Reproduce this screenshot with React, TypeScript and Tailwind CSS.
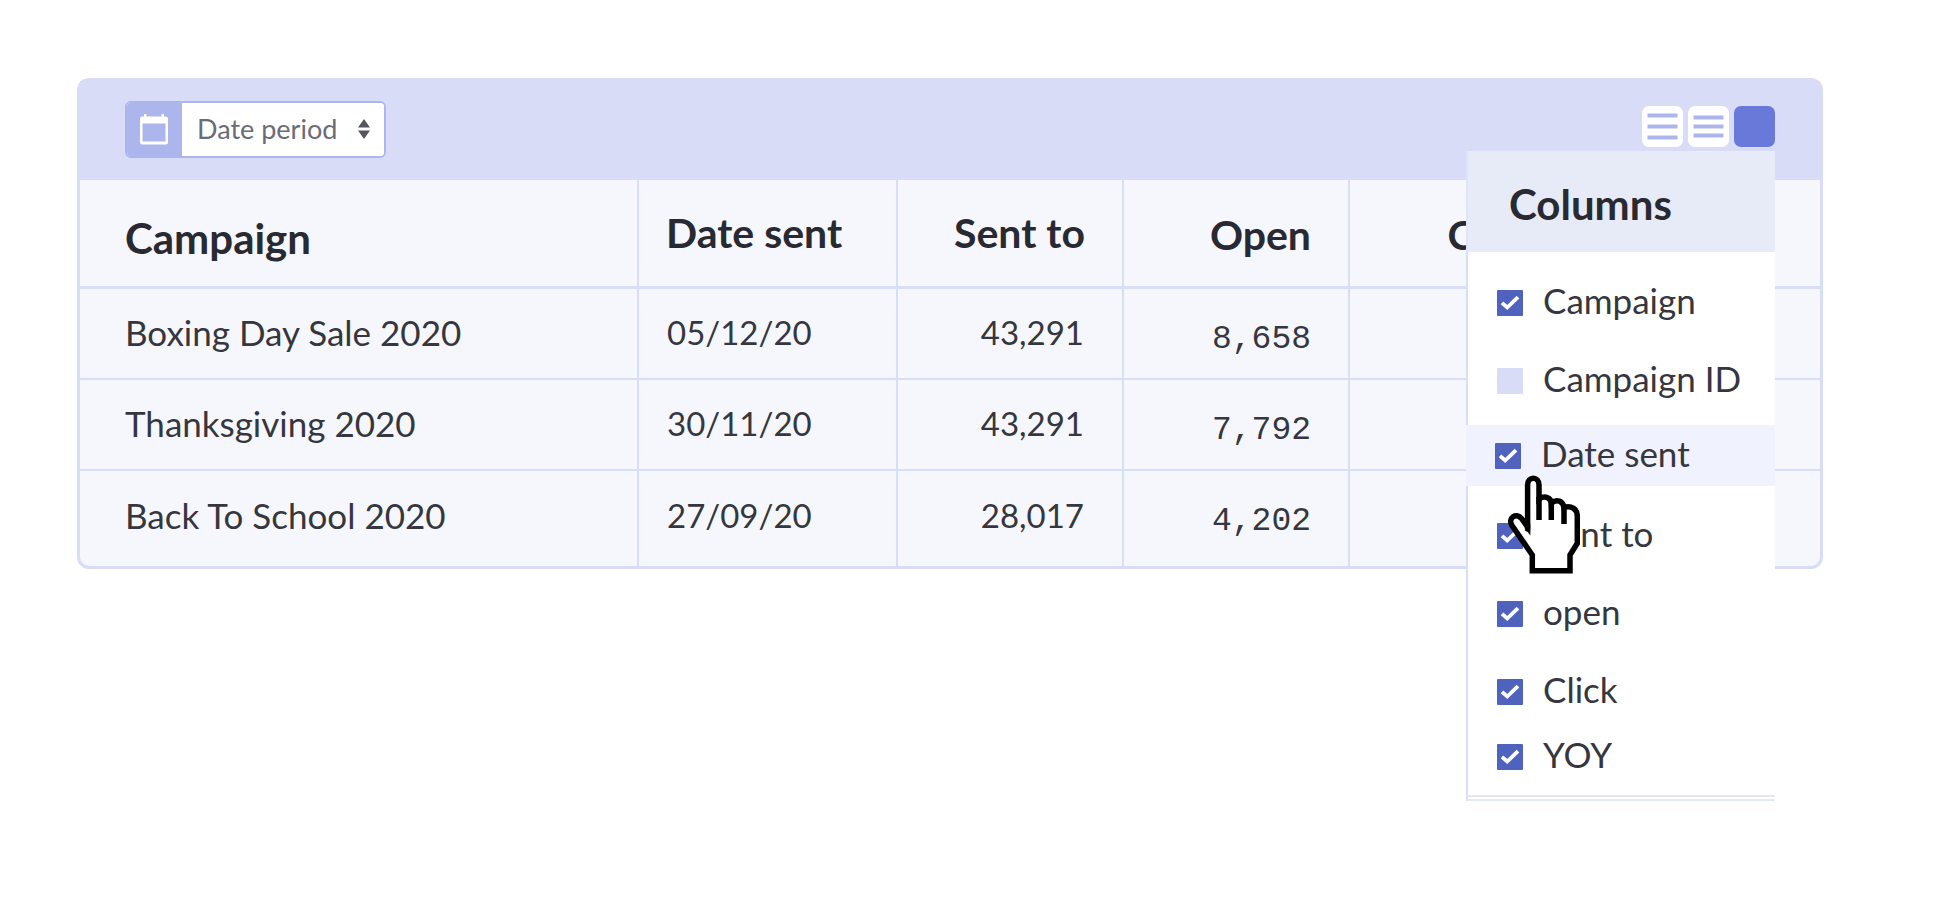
import React, { useState } from "react";

type Row = { name: string; date: string; sent: string; open: string };

const rows: Row[] = [
  { name: "Boxing Day Sale 2020", date: "05/12/20", sent: "43,291", open: "8,658" },
  { name: "Thanksgiving 2020", date: "30/11/20", sent: "43,291", open: "7,792" },
  { name: "Back To School 2020", date: "27/09/20", sent: "28,017", open: "4,202" },
];

const options = ["Campaign", "Campaign ID", "Date sent", "Sent to", "open", "Click", "YOY"];

function Lines({ offset }: { offset: number }) {
  return (
    <svg viewBox="0 0 41 41" className="size-full" stroke="#adb6ec" strokeWidth="4" aria-hidden="true">
      <path d={`M5.500 ${20.5 - offset}h30M5.500 20.5h30M5.500 ${20.5 + offset}h30`} />
    </svg>
  );
}

function ColumnOption({ label }: { label: string }) {
  const [checked, setChecked] = useState(label !== "Campaign ID");
  const active = label === "Date sent";
  const height = active ? "mt-[5px] mb-[11px] -ml-[2px] h-[61px] bg-[#f0f3fd]" : label === "YOY" ? "h-[52px]" : "h-[78px]";
  return (
    <li className={height}>
      <label className="flex h-full items-center pl-[29px] text-[35px] leading-[40px]">
        <span className="relative mr-[20px] block size-[26px] shrink-0">
          <input
            type="checkbox"
            checked={checked}
            onChange={() => setChecked(!checked)}
            className="block size-[26px] appearance-none rounded-[1px] bg-[#d8dcf6] checked:bg-[#4f62bd]"
          />
          {checked && (
            <svg viewBox="0 0 26 26" className="pointer-events-none absolute inset-0" fill="none" stroke="#fff" strokeWidth="3.8" aria-hidden="true">
              <path d="M5 12.800l5.200 4.700L21 7.200" />
            </svg>
          )}
        </span>
        <span className="pb-[6px]">{label}</span>
      </label>
    </li>
  );
}

export default function App() {
  const head = "border-l-2 border-[#d8def7] font-bold";
  const cell = "border-l-2 border-[#d8def7]";
  return (
    <main className="min-h-screen bg-white pt-[78px] pr-[125px] pl-[77px] font-['Lato',sans-serif] text-[#36373e]">
      <section className="relative rounded-[12px] border-[3px] border-[#d8dcf6] bg-[#f5f7fc]">
        <header className="flex h-[99px] items-start justify-between bg-[#d8dcf6] pr-[45px] pl-[45px]">
          <div className="mt-[20px] flex h-[57px] w-[261px] overflow-hidden rounded-[6px] border-2 border-[#adb6ec] bg-white">
            <span className="flex w-[55px] shrink-0 items-center justify-center bg-[#adb6ec] pr-[2px] pb-[2px]">
              <svg viewBox="0 0 30 32" className="h-[32px] w-[30px]" aria-hidden="true">
                <path fill="#fff" fillRule="evenodd" d="M5 1h2.500v2.500h15V1H25v2.500h1.500a2.500 2.500 0 0 1 2.500 2.500v23a2.500 2.500 0 0 1-2.500 2.500h-23a2.500 2.500 0 0 1-2.500-2.500V6a2.500 2.500 0 0 1 2.500-2.500H5zM3.500 10.500v18h23v-18z" />
              </svg>
            </span>
            <div className="relative flex-1">
              <select aria-label="Date period" className="h-full w-full appearance-none bg-white pl-[15px] text-[27px] text-[#6a6c78] outline-none">
                <option>Date period</option>
              </select>
              <svg viewBox="0 0 12 20" className="pointer-events-none absolute top-[16px] right-[14px] h-[20px] w-[12px]" fill="#55575f" aria-hidden="true">
                <path d="M6 0l6 8.500H0zM6 20l6-8.500H0z" />
              </svg>
            </div>
          </div>
          <div className="mt-[25px] flex gap-[5px]">
            <button aria-label="Comfortable rows" className="size-[41px] rounded-[7px] bg-white"><Lines offset={11} /></button>
            <button aria-label="Compact rows" className="size-[41px] rounded-[7px] bg-white"><Lines offset={9} /></button>
            <button aria-label="Choose columns" className="size-[41px] rounded-[7px] bg-[#6879d9]" />
          </div>
        </header>

        <table className="w-full table-fixed border-separate border-spacing-0 text-[33px] leading-[40px]">
          <colgroup>
            <col className="w-[557px]" />
            <col className="w-[259px]" />
            <col className="w-[226px]" />
            <col className="w-[226px]" />
            <col className="w-[226px]" />
            <col />
          </colgroup>
          <thead>
            <tr className="h-[109px] text-[41px] leading-[48px] text-[#292a31] *:border-b-[3px] *:border-[#d8def7]">
              <th className="pt-[9px] pl-[45px] text-left text-[42px] font-bold">Campaign</th>
              <th className={`${head} pl-[27px] text-left`}>Date sent</th>
              <th className={`${head} pr-[37px] text-right`}>Sent to</th>
              <th className={`${head} pt-[3px] pr-[37px] text-right`}>Open</th>
              <th className={`${head} pt-[3px] pr-[37px] text-right`}>Click</th>
              <td className={cell} />
            </tr>
          </thead>
          <tbody>
            {rows.map((r) => (
              <tr key={r.name} className="h-[91px] not-last:*:border-b-2 *:pb-[3px] last:h-[95px] last:*:pb-[8px] *:border-[#d8def7]">
                <td className="pl-[45px] text-[35px]">{r.name}</td>
                <td className={`${cell} pl-[28px]`}>{r.date}</td>
                <td className={`${cell} pr-[38px] text-right`}>{r.sent}</td>
                <td className={`${cell} pt-[15px] pr-[37px] text-right font-['Liberation_Mono',monospace]`}>{r.open}</td>
                <td className={cell} />
                <td className={cell} />
              </tr>
            ))}
          </tbody>
        </table>

        <aside className="absolute top-[70px] right-[45px] w-[309px] bg-white">
          <h2 className="flex h-[101px] items-center border-l-2 border-[#dfe4f8] bg-[#e7ebf8] pt-[5px] pl-[41px] text-[42px] leading-[48px] font-bold text-[#292a31]">
            Columns
          </h2>
          <ul className="flow-root border-l-2 border-[#d8def7] pt-[12px] pb-[12px]">
            {options.map((o) => (
              <ColumnOption key={o} label={o} />
            ))}
          </ul>
          <div className="h-[6px] border-t-2 border-b-2 border-l-2 border-t-[#e6e7ee] border-b-[#e4e8fb] border-l-[#d8def7]" />
          <svg viewBox="0 0 72 99" className="pointer-events-none absolute top-[324px] left-[42px] h-[99px] w-[72px]" fill="#fff" stroke="#000" strokeWidth="5.500" aria-hidden="true">
            <path d="M24.300 95.700V80L3.700 50C0 43 8 37 13.500 43.500L19.600 52V10C19.600 1 31 1 31 10V24C37 20 43 23 43.300 28C49 23.500 55 26 56 32.500C63 30 69.300 34 69.300 41V68.300L62 80V95.700Z" />
            <path d="M31 22V45M43.300 27V45M56 31V49" />
            <path d="M19.600 50V54" strokeLinecap="round" />
          </svg>
        </aside>
      </section>
    </main>
  );
}
